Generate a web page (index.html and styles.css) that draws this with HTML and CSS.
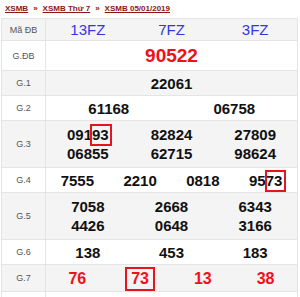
FILE: index.html
```html
<!DOCTYPE html>
<html>
<head>
<meta charset="utf-8">
<link rel="stylesheet" href="styles.css">
</head>
<body>
<div class="crumbs">
  <a href="#">XSMB</a><span class="sep">»</span><a href="#">XSMB Thứ 7</a><span class="sep">»</span><a href="#">XSMB 05/01/2019</a>
</div>
<table class="kq">
  <tr class="r-code shade">
    <td class="lbl">Mã ĐB</td>
    <td><div class="g g3 code"><span>13FZ</span><span>7FZ</span><span>3FZ</span></div></td>
  </tr>
  <tr class="r-db">
    <td class="lbl">G.ĐB</td>
    <td><div class="g g1 db"><span>90522</span></div></td>
  </tr>
  <tr class="r-1 shade">
    <td class="lbl">G.1</td>
    <td><div class="g g1"><span>22061</span></div></td>
  </tr>
  <tr class="r-1">
    <td class="lbl">G.2</td>
    <td><div class="g g2"><span>61168</span><span>06758</span></div></td>
  </tr>
  <tr class="r-2 shade">
    <td class="lbl">G.3</td>
    <td><div class="g g3"><span>091<i class="hl">93</i></span><span>82824</span><span>27809</span><span>06855</span><span>62715</span><span>98624</span></div></td>
  </tr>
  <tr class="r-1">
    <td class="lbl">G.4</td>
    <td><div class="g g4"><span>7555</span><span>2210</span><span>0818</span><span>95<i class="hl hl4">73</i></span></div></td>
  </tr>
  <tr class="r-2 shade">
    <td class="lbl">G.5</td>
    <td><div class="g g3"><span>7058</span><span>2668</span><span>6343</span><span>4426</span><span>0648</span><span>3166</span></div></td>
  </tr>
  <tr class="r-1">
    <td class="lbl">G.6</td>
    <td><div class="g g3"><span>138</span><span>453</span><span>183</span></div></td>
  </tr>
  <tr class="r-7 shade">
    <td class="lbl">G.7</td>
    <td><div class="g g4 red"><span>76</span><span><i class="hl hl7">73</i></span><span>13</span><span>38</span></div></td>
  </tr>
  <tr class="r-end">
    <td class="lbl"></td>
    <td></td>
  </tr>
</table>
</body>
</html>
```

FILE: styles.css
```css
html, body {
  margin: 0;
  padding: 0;
  background: #fff;
  font-family: "Liberation Sans", Arial, sans-serif;
}

.crumbs {
  height: 18px;
  padding: 0 0 0 5px;
  box-sizing: border-box;
  font-size: 8px;
  font-weight: bold;
  line-height: 18px;
  color: #8e1515;
  white-space: nowrap;
}

.crumbs a {
  color: #8e1515;
  text-decoration: underline;
}

.crumbs .sep {
  margin: 0 5px;
}

.kq {
  margin-left: 1px;
  width: 297px;
  border-collapse: collapse;
  table-layout: fixed;
}

.kq td {
  border: 1px solid #e4e4e4;
  padding: 0;
  vertical-align: middle;
}

.kq td.lbl {
  width: 43px;
  text-align: center;
  font-size: 9px;
  color: #555;
}

.shade td {
  background: #f4f4f4;
}

.r-code td { height: 21px; }
.r-db td { height: 29px; }
.r-1 td { height: 24px; }
.r-2 td { height: 46px; }
.r-7 td { height: 26px; }
.r-end td { height: 10px; }

.g {
  display: grid;
  font-size: 15px;
  font-weight: bold;
  color: #111;
  line-height: 19px;
  text-align: center;
}

.g1 { grid-template-columns: 1fr; }
.g2 { grid-template-columns: 1fr 1fr; }
.g3 { grid-template-columns: 1fr 1fr 1fr; }
.g4 { grid-template-columns: 1fr 1fr 1fr 1fr; }

.g.code {
  font-weight: normal;
  font-size: 15px;
  color: #3535e0;
}

.g.db {
  font-size: 19px;
  color: #f0101a;
}

.g.red {
  color: #f0101a;
  font-size: 16px;
}

.hl {
  font-style: normal;
  position: relative;
}

.hl::after {
  content: "";
  position: absolute;
  left: -2px;
  right: -3px;
  top: -2px;
  bottom: -3px;
  border: 2px solid #e8141c;
}

.hl4::after {
  left: -1px;
  right: -4px;
  top: -2px;
  bottom: -3px;
}

.hl7::after {
  left: -6px;
  right: -6px;
  top: -3px;
  bottom: -4px;
}
```
